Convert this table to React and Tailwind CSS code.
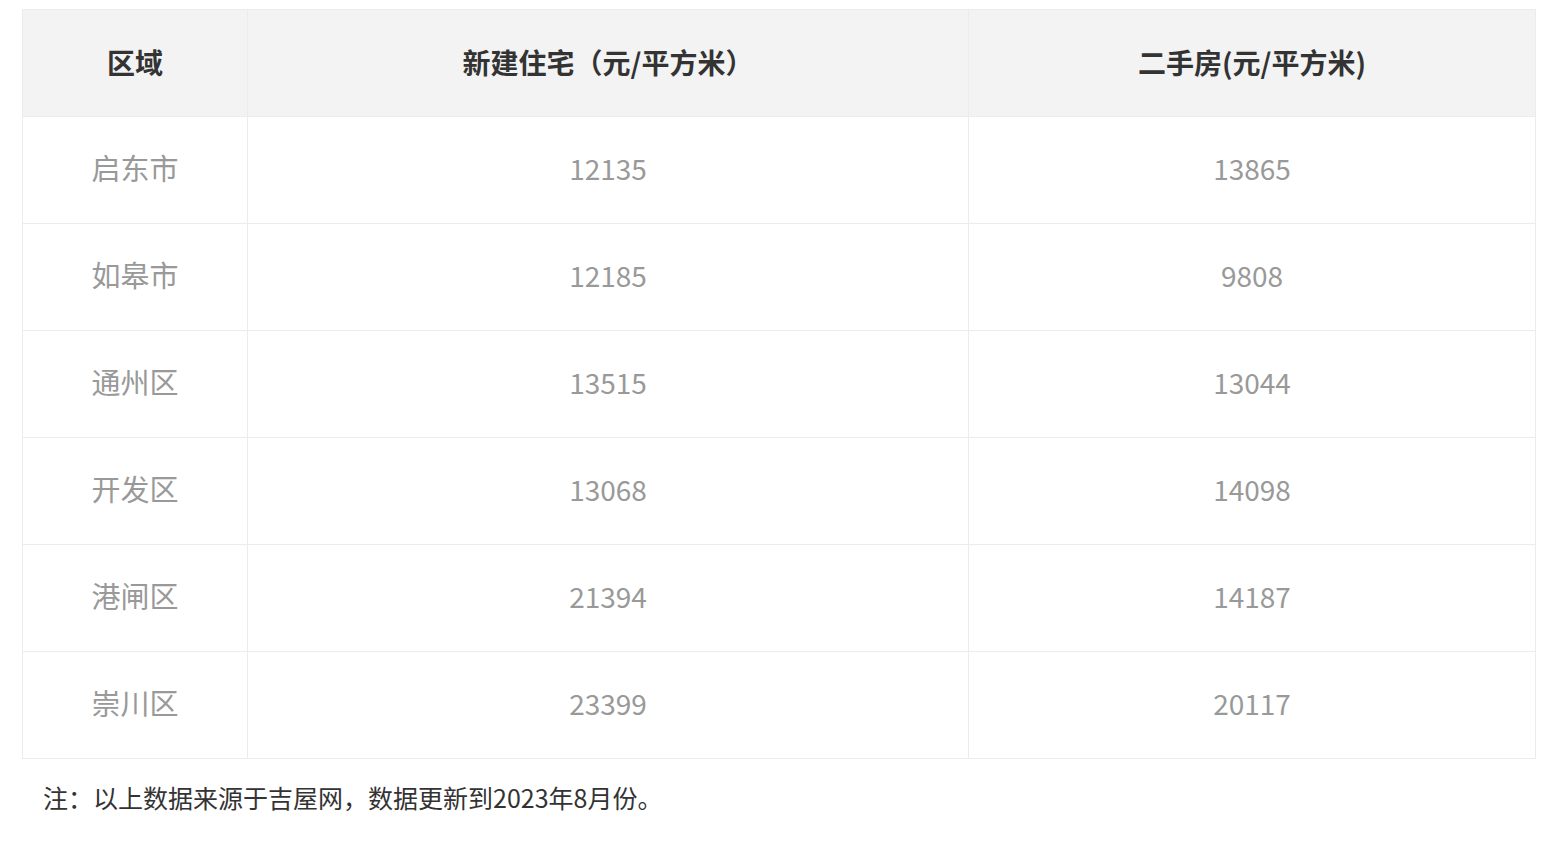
import React from "react";

const rows = [
  ["启东市", "12135", "13865"],
  ["如皋市", "12185", "9808"],
  ["通州区", "13515", "13044"],
  ["开发区", "13068", "14098"],
  ["港闸区", "21394", "14187"],
  ["崇川区", "23399", "20117"],
];

export default function App() {
  return (
    <div
      className="w-[1554px] h-[848px] bg-white pt-[9px] pl-[22px]"
      style={{ fontFamily: '"Noto Sans CJK SC", "Noto Sans", sans-serif' }}
    >
      <table className="table-fixed border-collapse w-[1513px]">
        <colgroup>
          <col className="w-[225px]" />
          <col className="w-[721px]" />
          <col className="w-[567px]" />
        </colgroup>
        <thead>
          <tr className="h-[107px] bg-[#f3f3f3]">
            <th className="border border-[#ececec] pb-[3px] text-[28px] font-bold text-[#333] text-center">区域</th>
            <th className="border border-[#ececec] pb-[3px] text-[28px] font-bold text-[#333] text-center">新建住宅（元/平方米）</th>
            <th className="border border-[#ececec] pb-[3px] text-[28px] font-bold text-[#333] text-center">二手房(元/平方米)</th>
          </tr>
        </thead>
        <tbody>
          {rows.map((r) => (
            <tr key={r[0]} className="h-[107px]">
              <td className="border border-[#ececec] pb-[4px] text-[29px] text-[#999] text-center">{r[0]}</td>
              <td className="border border-[#ececec] pb-[4px] text-[28px] text-[#999] text-center">{r[1]}</td>
              <td className="border border-[#ececec] pb-[4px] text-[28px] text-[#999] text-center">{r[2]}</td>
            </tr>
          ))}
        </tbody>
      </table>
      <p className="mt-[22px] pl-[21px] text-[25px] leading-[32px] text-[#333]">
        注：以上数据来源于吉屋网，数据更新到2023年8月份。
      </p>
    </div>
  );
}
